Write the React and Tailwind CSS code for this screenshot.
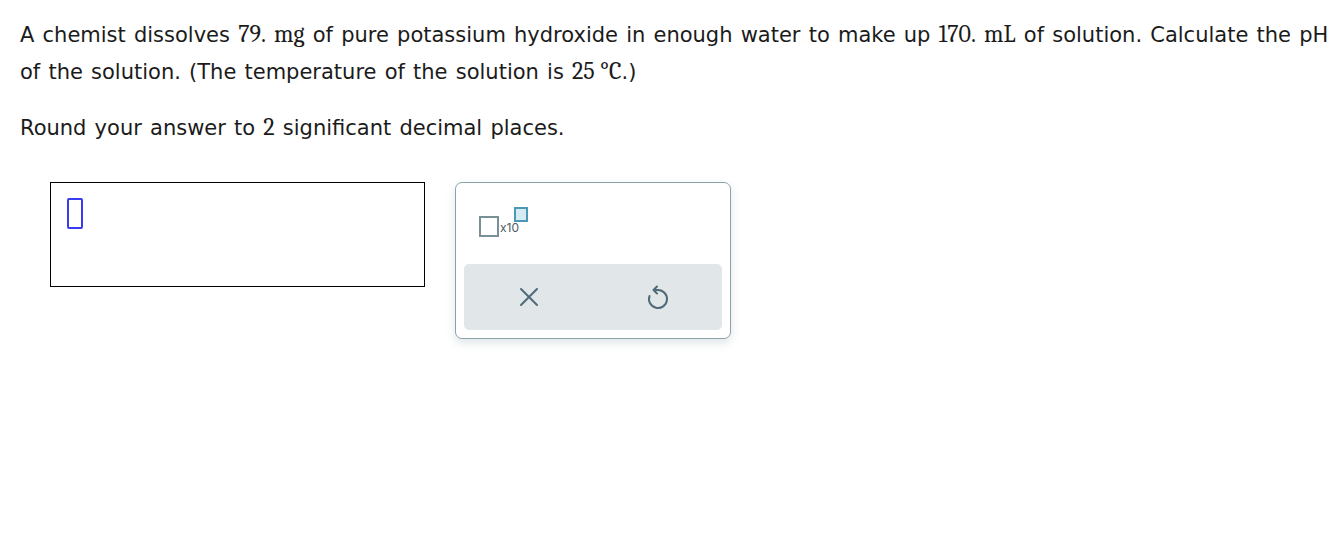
import React from "react";

const M = ({ children }) => <span className="font-serif text-[24px] [word-spacing:0]">{children}</span>;

export default function App() {
  return (
    <div className="w-[1344px] h-[536px] bg-white text-[#1b1b1b] font-['DejaVu_Sans',Verdana,sans-serif]">
      <div className="pl-5 pt-4 text-[21px] leading-[36px] [word-spacing:1.5px]">
        <p className="w-[1320px]">
          A chemist dissolves <M>79.</M> <M>mg</M> of pure potassium hydroxide in enough water to make up <M>170.</M> <M>mL</M> of solution. Calculate the pH of the solution. (The temperature of the solution is <M>25 °C</M>.)
        </p>
        <p className="mt-[19px]">
          Round your answer to <M>2</M> significant decimal places.
        </p>
      </div>
      <div className="flex items-start gap-[30px] pl-[50px] mt-[36px]">
        <div className="w-[375px] h-[105px] border border-black pl-4 pt-[15px]">
          <div className="w-4 h-[31px] border-2 border-[#3a3af0] rounded-[2px]" />
        </div>
        <div className="w-[276px] h-[157px] border border-[#8ea1aa] rounded-[7px] bg-white shadow-[0_4px_10px_rgba(80,110,125,0.18)] p-2 flex flex-col">
          <div className="flex-1 flex items-start pl-[15px] pt-[16px]">
            <div className="mt-[9px] w-5 h-[21px] border-2 border-[#7a9099] bg-white" />
            <span className="mt-[15px] ml-px text-[12px] leading-[12px] text-[#4c5a61] font-['Inter',sans-serif]">x10</span>
            <div className="-ml-[5px] mt-0 w-[14px] h-[15px] border-2 border-[#4a9ab5] bg-[#d6ecf3]" />
          </div>
          <div className="h-[66px] bg-[#e1e6e9] rounded-[5px] flex items-center">
            <div className="flex-1 flex justify-center">
              <svg width="20" height="20" viewBox="0 0 20 20" fill="none" stroke="#4f6b78" strokeWidth="2" strokeLinecap="round">
                <path d="M2 2 L18 18 M18 2 L2 18" />
              </svg>
            </div>
            <div className="flex-1 flex justify-center">
              <svg width="24" height="28" viewBox="0 0 24 28" fill="none" stroke="#4f6b78" strokeWidth="2" strokeLinecap="round" strokeLinejoin="round">
                <path d="M8 7 H12 A9 9 0 1 1 3.5 13" />
                <path d="M11 3.5 L7.5 7 L11 10.5" />
              </svg>
            </div>
          </div>
        </div>
      </div>
    </div>
  );
}
